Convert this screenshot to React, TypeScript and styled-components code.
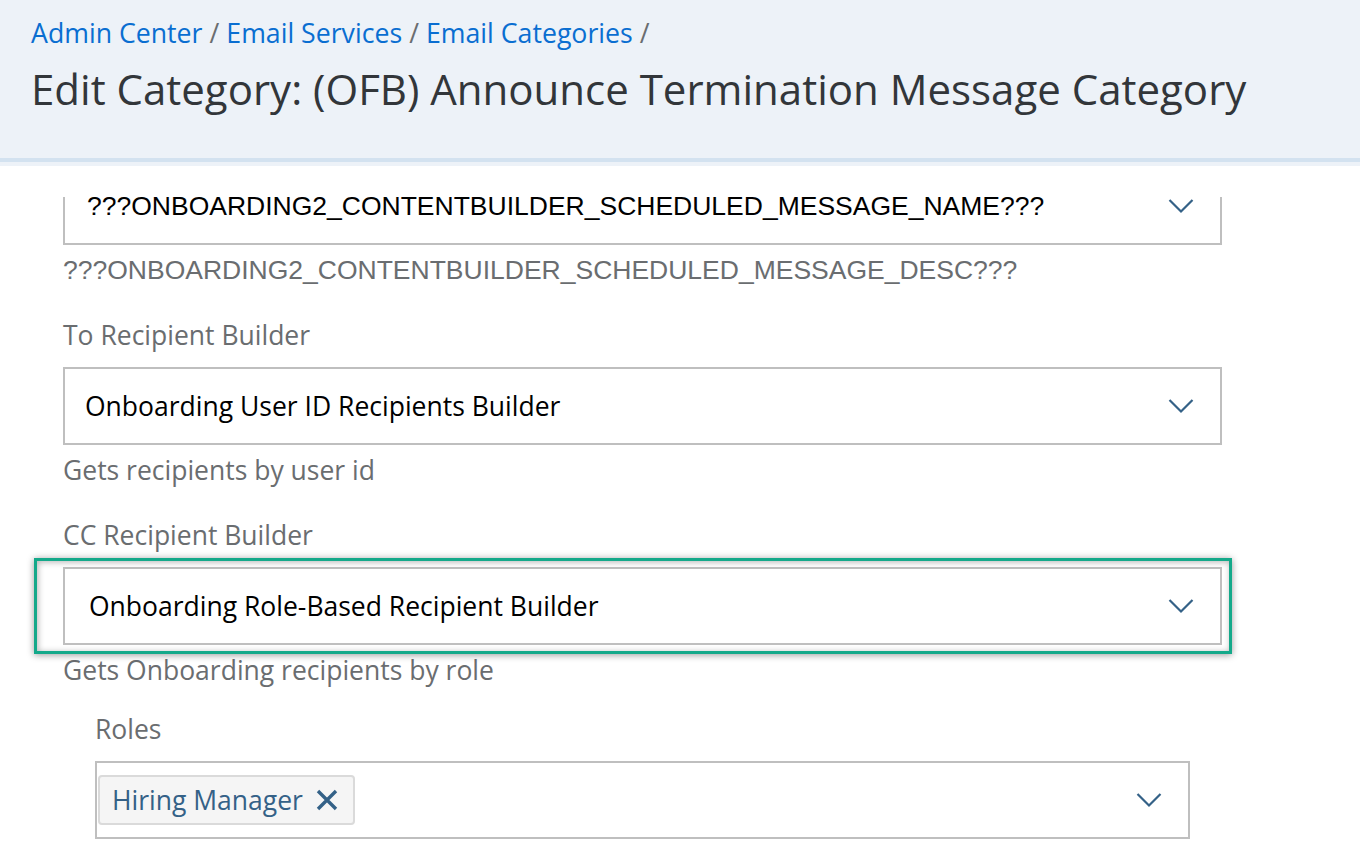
import styled, { createGlobalStyle } from "styled-components";

const UI_FONT = `"Open Sans", "Noto Sans", sans-serif`;
const FALLBACK_FONT = `"Liberation Sans", Arial, sans-serif`;

const GlobalStyle = createGlobalStyle`
  html, body {
    margin: 0;
    padding: 0;
    background: #ffffff;
  }
  body {
    font-family: ${UI_FONT};
  }
`;

const Page = styled.div`
  width: 1360px;
  height: 864px;
  display: flex;
  flex-direction: column;
  overflow: hidden;
  background: #ffffff;
`;

const Header = styled.header`
  background: #edf2f8;
  padding: 14px 0 0 31px;
  height: 144px;
  border-bottom: 4px solid #d3e2f0;
  box-shadow: 0 4px 0 #edf2f8;
  flex-shrink: 0;
`;

const Breadcrumbs = styled.nav`
  display: flex;
  align-items: center;
  gap: 7px;
  font-size: 26.7px;
  line-height: 38px;
  color: #6a6d70;
`;

const Crumb = styled.a`
  color: #0a6ed1;
  text-decoration: none;
`;

const Title = styled.h1`
  margin: 10px 0 0;
  font-size: 42px;
  line-height: 54px;
  font-weight: 400;
  color: #32363a;
`;

const Viewport = styled.div`
  margin-top: 35px;
  flex: 1;
  overflow: hidden;
`;

const Content = styled.div`
  margin-top: -30px;
  padding: 0 138px 0 63px;
`;

const Field = styled.div`
  display: flex;
  flex-direction: column;
`;

const Label = styled.div`
  margin: 31px 0 15px;
  font-size: 26.5px;
  line-height: 34px;
  color: #6a6d70;
`;

const Hint = styled.div<{ $fallback?: boolean }>`
  margin-top: 8px;
  font-family: ${(p) => (p.$fallback ? FALLBACK_FONT : UI_FONT)};
  font-size: 26.5px;
  line-height: 34px;
  color: #6a6d70;
`;

const Highlight = styled.div`
  position: relative;
`;

const Frame = styled.div`
  position: absolute;
  left: -29px;
  right: -10px;
  top: -9px;
  bottom: -9px;
  border: 3px solid #14a98a;
  box-shadow: 0 1px 7px rgba(0, 0, 0, 0.4), inset 1px 1px 6px rgba(0, 0, 0, 0.3);
  pointer-events: none;
`;

const SelectBox = styled.div<{ $textInset?: number }>`
  height: 78px;
  box-sizing: border-box;
  border: 2px solid #bfbfbf;
  background: #ffffff;
  display: flex;
  align-items: center;
  padding: 0 26px 0 ${(p) => p.$textInset ?? 20}px;
  gap: 12px;
`;

const Value = styled.div<{ $fallback?: boolean }>`
  flex: 1;
  font-family: ${(p) => (p.$fallback ? FALLBACK_FONT : UI_FONT)};
  font-size: 26.5px;
  color: #000000;
  white-space: nowrap;
  overflow: hidden;
`;

const Chevron = () => (
  <svg width="26" height="16" viewBox="0 0 26 16" fill="none">
    <path d="M1.5 2 L13 13.5 L24.5 2" stroke="#346187" strokeWidth="2.2" />
  </svg>
);

const SubSection = styled.div`
  padding: 0 32px;
`;

const SubLabel = styled(Label)`
  margin-top: 25px;
`;

const TokenBox = styled(SelectBox)`
  padding-left: 0;
`;

const Tokens = styled.div`
  flex: 1;
  display: flex;
  align-items: center;
`;

const Token = styled.span`
  display: inline-flex;
  align-items: center;
  gap: 12px;
  height: 50px;
  box-sizing: border-box;
  padding: 0 14px 0 12px;
  margin-left: 1px;
  background: #f5f5f5;
  border: 2px solid #dadada;
  border-radius: 4px;
  font-size: 26.5px;
  color: #346187;
`;

const TokenClose = () => (
  <svg width="24" height="24" viewBox="0 0 24 24" fill="none">
    <path d="M3 3 L21 21 M21 3 L3 21" stroke="#346187" strokeWidth="3.4" />
  </svg>
);

export default function App() {
  return (
    <>
      <GlobalStyle />
      <Page>
        <Header>
          <Breadcrumbs>
            <Crumb href="#">Admin Center</Crumb>/
            <Crumb href="#">Email Services</Crumb>/
            <Crumb href="#">Email Categories</Crumb>/
          </Breadcrumbs>
          <Title>Edit Category: (OFB) Announce Termination Message Category</Title>
        </Header>
        <Viewport>
          <Content>
            <Field>
              <SelectBox $textInset={22}>
                <Value $fallback>???ONBOARDING2_CONTENTBUILDER_SCHEDULED_MESSAGE_NAME???</Value>
                <Chevron />
              </SelectBox>
              <Hint $fallback>???ONBOARDING2_CONTENTBUILDER_SCHEDULED_MESSAGE_DESC???</Hint>
            </Field>
            <Field>
              <Label>To Recipient Builder</Label>
              <SelectBox>
                <Value>Onboarding User ID Recipients Builder</Value>
                <Chevron />
              </SelectBox>
              <Hint>Gets recipients by user id</Hint>
            </Field>
            <Field>
              <Label>CC Recipient Builder</Label>
              <Highlight>
                <SelectBox $textInset={24}>
                  <Value>Onboarding Role-Based Recipient Builder</Value>
                  <Chevron />
                </SelectBox>
                <Frame />
              </Highlight>
              <Hint>Gets Onboarding recipients by role</Hint>
            </Field>
            <SubSection>
              <SubLabel>Roles</SubLabel>
              <TokenBox>
                <Tokens>
                  <Token>
                    Hiring Manager
                    <TokenClose />
                  </Token>
                </Tokens>
                <Chevron />
              </TokenBox>
            </SubSection>
          </Content>
        </Viewport>
      </Page>
    </>
  );
}
